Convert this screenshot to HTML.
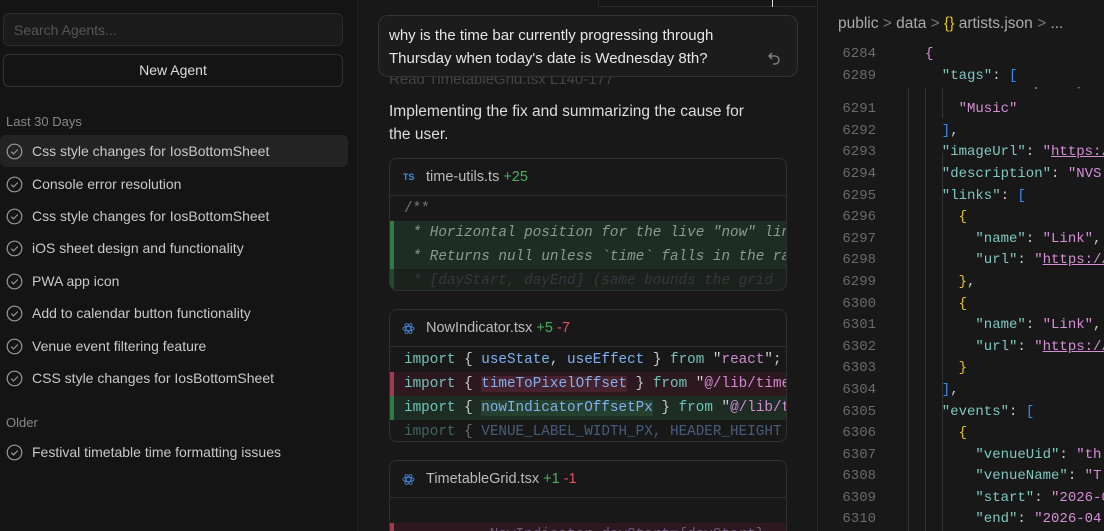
<!DOCTYPE html>
<html><head><meta charset="utf-8"><style>
*{margin:0;padding:0;box-sizing:border-box}
html{width:1104px;height:531px;overflow:hidden}
body{width:1104px;height:531px;overflow:hidden;background:#181818;font-family:"Liberation Sans",sans-serif;color:#ccc;position:relative}
.abs{position:absolute;white-space:pre}
#side{position:absolute;left:0;top:0;width:358px;height:531px;background:#141414;border-right:1px solid #222}
.item{position:absolute;left:0;width:348px;height:32px;font-size:14px;color:#c8c8c8;line-height:32px;padding-left:32px}
.item svg{position:absolute;left:6px;top:8px}
.sel{background:#232323;border-radius:6px}
.card{position:absolute;left:389px;width:398px;border:1px solid #303030;border-radius:8px;overflow:hidden;background:#181818}
.ch{height:37px;border-bottom:1px solid #2e2e2e;font-size:14.5px;color:#bbb;line-height:36px;padding-left:36px;position:relative}
.cl{height:24px;line-height:24px;padding-left:14px;white-space:pre;font-family:"Liberation Mono",monospace;font-size:14.3px}
.add{background:#1e2d24;box-shadow:inset 4px 0 #2f7a45}
.del{background:#2e1820;box-shadow:inset 4px 0 #a03a4e}
.kw{color:#6fc3b8}.id{color:#7fb0f0}.st{color:#d08ad0}
#ed{position:absolute;left:817px;top:0;width:287px;height:531px;background:#181818;border-left:1px solid #2a2a2a;overflow:hidden}
.ln{position:absolute;left:0;width:58px;text-align:right;color:#6a6a6a;font-family:"Liberation Mono",monospace;font-size:14px;line-height:22px}
.cd{position:absolute;left:107px;font-family:"Liberation Mono",monospace;font-size:14px;line-height:22px;white-space:pre;color:#ccc}
.k{color:#7ec8c0}.s{color:#d58fd5}.y{color:#e6c419}.b{color:#3b8ee8}.u{text-decoration:underline}
</style></head><body>
<div id="side">
 <div class="abs" style="left:3px;top:13px;width:340px;height:33px;border:1px solid #2c2c2c;background:#1b1b1b;border-radius:6px;font-size:14px;color:#555;padding:8px 10px">Search Agents...</div>
 <div class="abs" style="left:3px;top:54px;width:340px;height:33px;border:1px solid #333;border-radius:6px;font-size:14px;color:#ddd;text-align:center;line-height:31px">New Agent</div>
 <div class="abs" style="left:6px;top:114px;font-size:13px;color:#888">Last 30 Days</div>
 <div class="abs" style="left:6px;top:415px;font-size:13px;color:#888">Older</div>
</div>
<div id="items"></div>
<div class="abs" style="left:598px;top:0;width:220px;height:7px;border:1px solid #2a2a2a;border-top:none;background:#161616"></div>
<div class="abs" style="left:772px;top:0;width:1px;height:7px;background:#ddd"></div>
<div class="abs" style="left:389px;top:71px;font-size:15px;color:#444">Read TimetableGrid.tsx L140-177</div>
<div class="abs" style="left:378px;top:15px;width:420px;height:62px;border:1px solid #333;border-radius:10px;background:#1c1c1c;font-size:15px;color:#e6e6e6;line-height:23px;padding:8px 10px">why is the time bar currently progressing through
Thursday when today's date is Wednesday 8th?</div>
<svg class="abs" style="left:766px;top:50px" width="16" height="16" viewBox="0 0 16 16" fill="none" stroke="#888" stroke-width="1.3"><path d="M6 3L3 6l3 3M3 6h6a4 4 0 0 1 0 8H7"/></svg>
<div class="abs" style="left:389px;top:100px;font-size:15.5px;color:#ddd;line-height:23px">Implementing the fix and summarizing the cause for
the user.</div>

<div class="card" style="top:158px;height:133px">
 <div class="ch"><span class="abs" style="left:13px;top:0;font-size:9px;font-weight:bold;color:#3f8ee0">TS</span>time-utils.ts <span style="color:#4caf60">+25</span></div>
 <div class="cl" style="color:#777;margin-top:1px">/**</div>
 <div class="cl add" style="color:#8a9a90;font-style:italic"> * Horizontal position for the live "now" line</div>
 <div class="cl add" style="color:#8a9a90;font-style:italic"> * Returns null unless `time` falls in the range</div>
 <div class="cl add" style="color:#556;font-style:italic;opacity:.5"> * [dayStart, dayEnd] (same bounds the grid</div>
</div>
<div class="card" style="top:309px;height:133px">
 <div class="ch"><svg class="abs" style="left:12px;top:12px" width="13" height="13" viewBox="0 0 14 14" fill="none" stroke="#3f7fd0" stroke-width="1"><ellipse cx="7" cy="7" rx="6" ry="2.4"/><ellipse cx="7" cy="7" rx="6" ry="2.4" transform="rotate(60 7 7)"/><ellipse cx="7" cy="7" rx="6" ry="2.4" transform="rotate(120 7 7)"/></svg>NowIndicator.tsx <span style="color:#4caf60">+5</span> <span style="color:#e0505f">-7</span></div>
 <div class="cl" style="margin-top:1px"><span class="kw">import</span> { <span class="id">useState</span>, <span class="id">useEffect</span> } <span class="kw">from</span> "<span class="st">react</span>";</div>
 <div class="cl del"><span class="kw">import</span> { <span class="id" style="background:#45222d">timeToPixelOffset</span> } <span class="kw">from</span> "<span class="st">@/lib/time-utils</span>";</div>
 <div class="cl add"><span class="kw">import</span> { <span class="id" style="background:#26402f">nowIndicatorOffsetPx</span> } <span class="kw">from</span> "<span class="st">@/lib/time</span>";</div>
 <div class="cl" style="opacity:.45"><span class="kw">import</span> { <span class="id">VENUE_LABEL_WIDTH_PX, HEADER_HEIGHT</span></div>
</div>
<div class="card" style="top:460px;height:80px">
 <div class="ch"><svg class="abs" style="left:12px;top:12px" width="13" height="13" viewBox="0 0 14 14" fill="none" stroke="#3f7fd0" stroke-width="1"><ellipse cx="7" cy="7" rx="6" ry="2.4"/><ellipse cx="7" cy="7" rx="6" ry="2.4" transform="rotate(60 7 7)"/><ellipse cx="7" cy="7" rx="6" ry="2.4" transform="rotate(120 7 7)"/></svg>TimetableGrid.tsx <span style="color:#4caf60">+1</span> <span style="color:#e0505f">-1</span></div>
 <div class="cl" style="margin-top:1px"></div>
 <div class="cl del" style="color:#6a5a7a">          NowIndicator dayStart={dayStart} </div>
</div>

<div id="ed">
 <div class="abs" style="left:20px;top:15px;font-size:15.5px;color:#aaa">public <span style="color:#777">&gt;</span> data <span style="color:#777">&gt;</span> <span class="y">{}</span> artists.json <span style="color:#777">&gt;</span> ...</div>
 <div class="abs" style="left:90px;top:88px;width:1px;height:443px;background:#333"></div>
 <div class="abs" style="left:107px;top:88px;width:1px;height:443px;background:#333"></div>
 <div class="abs" style="left:124px;top:88px;width:1px;height:30px;background:#333"></div>
 <div class="abs" style="left:124px;top:153px;width:1px;height:378px;background:#333"></div>
 <div id="lines"></div>
</div>
<script>
var items=[["Css style changes for IosBottomSheet",135,1],["Console error resolution",168],["Css style changes for IosBottomSheet",200],["iOS sheet design and functionality",232],["PWA app icon",265],["Add to calendar button functionality",297],["Venue event filtering feature",330],["CSS style changes for IosBottomSheet",362],["Festival timetable time formatting issues",436]];
var h="";items.forEach(function(i){h+='<div class="item'+(i[2]?' sel':'')+'" style="top:'+i[1]+'px"><svg width="17" height="17" viewBox="0 0 17 17" fill="none" stroke="#999" stroke-width="1.2"><circle cx="8.5" cy="8.5" r="7.3"/><path d="M5.3 8.7l2.2 2.2 4.3-4.4"/></svg>'+i[0]+'</div>'});
document.getElementById("items").innerHTML=h;
function q(t,c){return '<span class="'+c+'">'+t+'</span>'}
var L=[
[6284,43,0,q('{','s')],
[6289,65,2,q('"tags"','k')+': '+q('[','b')],
[6291,98,4,q('"Music"','s')],
[6292,120,2,q(']','b')+','],
[6293,141,2,q('"imageUrl"','k')+': '+q('"','s')+q('https://','s u')],
[6294,163,2,q('"description"','k')+': '+q('"NVS','s')],
[6295,185,2,q('"links"','k')+': '+q('[','b')],
[6296,206,4,q('{','y')],
[6297,228,6,q('"name"','k')+': '+q('"Link"','s')+','],
[6298,249,6,q('"url"','k')+': '+q('"','s')+q('https://','s u')],
[6299,271,4,q('}','y')+','],
[6300,293,4,q('{','y')],
[6301,314,6,q('"name"','k')+': '+q('"Link"','s')+','],
[6302,336,6,q('"url"','k')+': '+q('"','s')+q('https://','s u')],
[6303,357,4,q('}','y')],
[6304,379,2,q(']','b')+','],
[6305,401,2,q('"events"','k')+': '+q('[','b')],
[6306,422,4,q('{','y')],
[6307,444,6,q('"venueUid"','k')+': '+q('"th','s')],
[6308,465,6,q('"venueName"','k')+': '+q('"T','s')],
[6309,487,6,q('"start"','k')+': '+q('"2026-04','s')],
[6310,508,6,q('"end"','k')+': '+q('"2026-04','s')]];
var o='<div class="cd" style="top:87px;left:'+(107+4*8.4)+'px;height:7px;overflow:hidden"><span class="s" style="position:relative;top:-15px">"Fri 10 April",</span></div>';
L.forEach(function(l){
 o+='<div class="ln" style="top:'+l[1]+'px">'+l[0]+'</div><div class="cd" style="top:'+l[1]+'px;left:'+(107+l[2]*8.4)+'px">'+l[3]+'</div>'});
document.getElementById("lines").innerHTML=o;
</script>
</body></html>
